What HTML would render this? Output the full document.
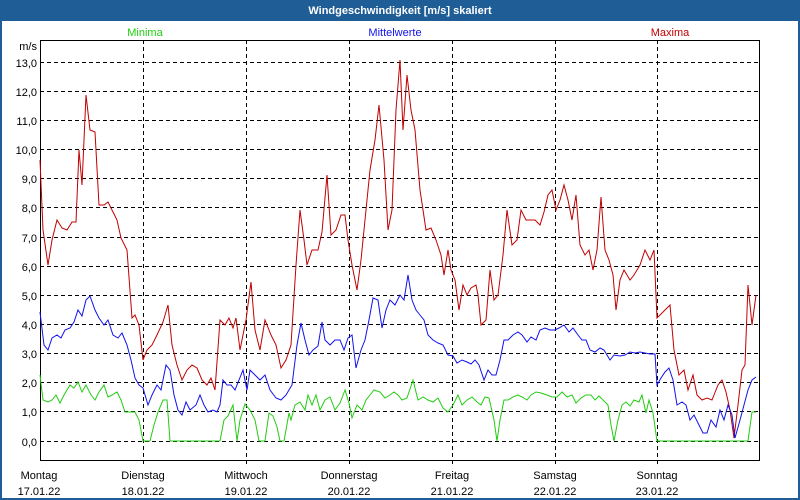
<!DOCTYPE html>
<html><head><meta charset="utf-8"><style>
html,body{margin:0;padding:0;background:#fff}
svg{display:block}
text{font-family:"Liberation Sans",sans-serif;font-size:11px}
</style></head><body>
<svg width="800" height="500" viewBox="0 0 800 500" xmlns="http://www.w3.org/2000/svg">
<rect x="0" y="0" width="800" height="500" fill="#1f5d96"/>
<rect x="2" y="21" width="796" height="477" fill="#fff"/>
<text x="400" y="14" fill="#fff" font-weight="bold" text-anchor="middle">Windgeschwindigkeit [m/s] skaliert</text>
<text x="145" y="36" fill="#22cc11" text-anchor="middle">Minima</text>
<text x="395" y="36" fill="#1111ee" text-anchor="middle">Mittelwerte</text>
<text x="670" y="36" fill="#c00000" text-anchor="middle">Maxima</text>
<text x="37" y="50" text-anchor="end">m/s</text>
<g text-anchor="end">
<text x="37" y="67">13,0</text><text x="37" y="96">12,0</text><text x="37" y="125">11,0</text><text x="37" y="154">10,0</text><text x="37" y="183">9,0</text><text x="37" y="212">8,0</text><text x="37" y="242">7,0</text><text x="37" y="271">6,0</text><text x="37" y="300">5,0</text><text x="37" y="329">4,0</text><text x="37" y="358">3,0</text><text x="37" y="387">2,0</text><text x="37" y="416">1,0</text><text x="37" y="446">0,0</text>
</g>
<g stroke="#000" stroke-width="1" stroke-dasharray="4,3">
<line x1="40" y1="62.5" x2="760" y2="62.5"/><line x1="40" y1="91.5" x2="760" y2="91.5"/><line x1="40" y1="120.5" x2="760" y2="120.5"/><line x1="40" y1="149.5" x2="760" y2="149.5"/><line x1="40" y1="178.5" x2="760" y2="178.5"/><line x1="40" y1="207.5" x2="760" y2="207.5"/><line x1="40" y1="237.5" x2="760" y2="237.5"/><line x1="40" y1="266.5" x2="760" y2="266.5"/><line x1="40" y1="295.5" x2="760" y2="295.5"/><line x1="40" y1="324.5" x2="760" y2="324.5"/><line x1="40" y1="353.5" x2="760" y2="353.5"/><line x1="40" y1="382.5" x2="760" y2="382.5"/><line x1="40" y1="411.5" x2="760" y2="411.5"/><line x1="40" y1="441.5" x2="760" y2="441.5"/>
<line x1="143.5" y1="40" x2="143.5" y2="466"/><line x1="246.5" y1="40" x2="246.5" y2="466"/><line x1="349.5" y1="40" x2="349.5" y2="466"/><line x1="452.5" y1="40" x2="452.5" y2="466"/><line x1="555.5" y1="40" x2="555.5" y2="466"/><line x1="657.5" y1="40" x2="657.5" y2="466"/>
</g>
<rect x="40.5" y="40.5" width="719" height="420" fill="none" stroke="#000"/>
<polyline fill="none" stroke="#c00000" stroke-width="1" points="40,160 43,230 48,265 52,240 57,220 62,228 67,230 72,222 76,222 79,150 82,185 86,95 90,130 95,132 99,205 104,205 108,202 112,210 117,220 121,238 127,250 132,318 135,315 139,325 143,360 147,350 152,345 157,335 163,322 168,305 172,345 177,365 182,380 187,370 192,365 197,368 202,380 207,385 211,378 215,390 220,320 225,325 229,318 233,328 236,318 240,350 246,320 251,282 255,330 260,350 265,320 271,335 276,345 281,368 286,360 291,345 296,265 300,210 304,240 307,265 312,250 318,250 322,232 327,175 331,235 336,230 341,215 345,215 348,240 352,265 357,290 361,260 366,210 370,170 375,140 379,105 384,160 388,230 392,210 396,110 400,60 403,130 407,75 411,110 415,130 420,190 426,230 431,228 436,240 441,255 444,275 448,250 451,270 455,280 459,310 463,285 467,295 471,288 476,285 478,295 481,325 486,320 490,270 494,300 498,295 503,255 507,210 512,245 517,240 521,210 526,220 530,220 535,220 540,225 544,212 548,195 552,190 556,210 560,200 564,185 568,200 572,220 576,195 580,245 585,255 589,250 593,270 597,250 601,197 605,250 609,260 613,275 616,310 620,280 624,270 630,280 634,275 640,265 645,250 650,260 654,250 657,318 660,315 665,310 670,305 674,350 679,375 684,370 688,390 693,375 697,395 702,400 707,398 712,400 718,385 722,380 726,392 730,410 734,438 738,405 742,370 745,365 748,285 752,325 756,295"/>
<polyline fill="none" stroke="#1111ee" stroke-width="1" points="40,312 44,345 48,350 52,338 57,335 61,338 65,330 70,328 74,322 78,310 82,316 86,300 90,296 95,310 99,318 104,325 108,320 113,335 118,338 122,333 127,345 131,360 135,378 139,385 143,388 148,405 152,395 157,385 161,390 166,365 170,370 174,395 178,410 182,415 186,402 190,410 196,405 200,395 204,405 208,412 213,410 217,412 220,405 223,380 227,385 231,385 235,390 239,380 243,370 247,390 250,370 255,375 260,380 265,375 270,390 276,398 281,400 286,395 292,385 297,345 301,323 305,340 309,355 313,350 318,346 322,322 325,340 330,345 335,340 340,340 344,350 348,338 352,335 356,368 361,350 365,340 369,320 373,298 378,300 382,328 386,310 390,300 395,305 400,295 404,300 408,275 412,300 416,310 420,315 424,320 428,335 433,340 438,343 443,345 448,355 453,356 457,363 462,360 467,362 471,364 475,360 479,365 484,380 488,370 492,375 496,375 500,360 504,340 508,340 513,335 518,332 522,335 527,342 531,337 536,340 540,330 545,328 550,330 555,330 559,328 564,325 569,332 573,328 578,335 582,340 586,340 590,350 595,352 600,348 604,350 610,360 614,355 620,356 625,355 630,352 635,353 640,352 645,353 650,354 655,354 657,385 661,378 665,372 669,368 673,380 677,405 682,402 686,405 690,420 694,415 699,425 703,433 707,433 711,420 716,427 720,410 724,420 728,405 732,415 735,438 740,420 744,405 748,390 752,380 756,377"/>
<polyline fill="none" stroke="#22cc11" stroke-width="1" points="40,375 43,400 48,402 52,400 56,395 60,403 64,395 70,385 74,388 78,382 82,392 86,385 91,395 95,400 99,392 104,385 108,397 112,395 117,392 121,400 125,412 130,412 135,412 139,420 143,441 150,441 154,425 158,412 163,400 167,400 170,441 220,441 224,420 228,416 233,405 237,441 240,420 245,404 250,410 255,420 259,441 265,441 269,413 273,416 277,427 280,441 284,441 289,413 291,420 295,405 300,402 305,410 308,395 312,405 316,395 320,410 325,400 330,397 335,410 340,403 345,390 349,403 352,418 357,405 362,410 366,400 370,395 374,390 380,392 385,398 390,395 394,392 398,395 402,400 407,398 413,380 418,400 423,397 428,400 433,402 438,398 443,408 448,412 453,405 458,395 462,405 467,400 472,397 477,402 481,405 485,397 489,398 494,420 497,441 500,420 504,400 508,400 513,397 518,395 522,397 527,400 531,395 536,392 541,393 547,395 552,397 557,397 562,392 567,397 572,395 576,403 581,398 586,395 591,395 595,400 599,396 603,400 608,405 611,425 614,441 618,420 622,405 626,402 630,406 634,400 639,402 642,395 646,413 649,400 653,413 657,441 748,441 752,412 756,412"/>
<g text-anchor="middle">
<text x="39" y="479">Montag</text><text x="39" y="495">17.01.22</text>
<text x="143" y="479">Dienstag</text><text x="143" y="495">18.01.22</text>
<text x="246" y="479">Mittwoch</text><text x="246" y="495">19.01.22</text>
<text x="349" y="479">Donnerstag</text><text x="349" y="495">20.01.22</text>
<text x="452" y="479">Freitag</text><text x="452" y="495">21.01.22</text>
<text x="555" y="479">Samstag</text><text x="555" y="495">22.01.22</text>
<text x="657" y="479">Sonntag</text><text x="657" y="495">23.01.22</text>
</g>
</svg>
</body></html>
